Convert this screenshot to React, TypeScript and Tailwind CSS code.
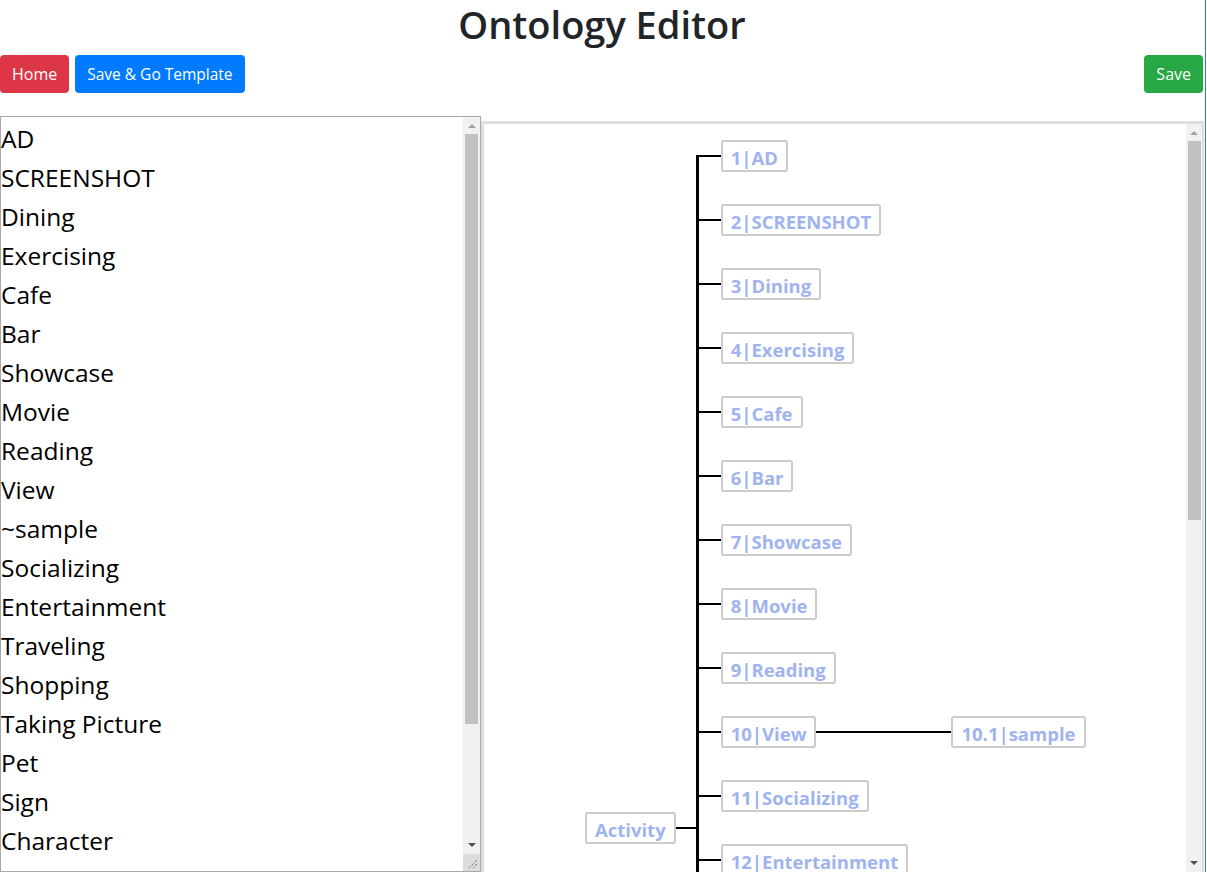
const listItems = [
  'AD',
  'SCREENSHOT',
  'Dining',
  'Exercising',
  'Cafe',
  'Bar',
  'Showcase',
  'Movie',
  'Reading',
  'View',
  '~sample',
  'Socializing',
  'Entertainment',
  'Traveling',
  'Shopping',
  'Taking Picture',
  'Pet',
  'Sign',
  'Character',
  'Food',
  'Sports',
  'Nature',
  'Event',
];

const treeNodes: { label: string; child?: string }[] = [
  { label: '1|AD' },
  { label: '2|SCREENSHOT' },
  { label: '3|Dining' },
  { label: '4|Exercising' },
  { label: '5|Cafe' },
  { label: '6|Bar' },
  { label: '7|Showcase' },
  { label: '8|Movie' },
  { label: '9|Reading' },
  { label: '10|View', child: '10.1|sample' },
  { label: '11|Socializing' },
  { label: '12|Entertainment' },
  { label: '13|Traveling' },
  { label: '14|Shopping' },
  { label: '15|Taking Picture' },
  { label: '16|Pet' },
  { label: '17|Sign' },
  { label: '18|Character' },
  { label: '19|Food' },
  { label: '20|Sports' },
  { label: '21|Nature' },
  { label: '22|Event' },
];

const font = { fontFamily: '"Open Sans", "Noto Sans", sans-serif' };

export default function App() {
  return (
    <div className="flex h-[872px] overflow-hidden bg-white" style={font}>
      <div className="w-[1204px] shrink-0">
        <h1 className="h-12 text-center text-[38px] font-semibold leading-[48px] text-[#212529]">
          Ontology Editor
        </h1>

        <div className="mt-[7px] flex items-center justify-between pr-px">
          <div className="flex gap-[6px]">
            <Btn color="bg-[#dc3545]">Home</Btn>
            <Btn color="bg-[#007bff]" small>
              Save &amp; Go Template
            </Btn>
          </div>
          <Btn color="bg-[#28a745]">Save</Btn>
        </div>

        <div className="mt-[23px] flex items-start">
          {/* left: raw list */}
          <div className="flex h-[756px] w-[481px] shrink-0 border border-[#a9a9a9]">
            <div className="flex-1 overflow-hidden pt-[2px]">
              {listItems.map((t) => (
                <div key={t} className="h-[39px] text-[24.5px] leading-[39px] text-black whitespace-nowrap">
                  {t}
                </div>
              ))}
            </div>
            <div className="flex w-[17px] flex-col bg-[#f1f1f1]">
              <Arrow dir="up" dim />
              <div className="mx-[2px] h-[590px] bg-[#c1c1c1]" />
              <div className="flex-1" />
              <Arrow dir="down" />
              <div className="flex h-[17px] items-end justify-end bg-[#dcdcdc] p-[2px]">
                <svg width="10" height="10" viewBox="0 0 10 10">
                  <path d="M9 1 L1 9 M9 5 L5 9" stroke="#555" strokeWidth="1" strokeDasharray="1 1" />
                </svg>
              </div>
            </div>
          </div>

          {/* right: tree view */}
          <div className="mt-[5px] flex h-[751px] flex-1 border-t-[3px] border-l-[3px] border-r-2 border-[#dedede]">
            <div className="flex-1 overflow-hidden">
              <div className="flex items-center pl-[101px]">
                <Node>Activity</Node>
                <div className="h-[2px] w-5 bg-black" />
                <div className="flex flex-col">
                  {treeNodes.map((n, i) => (
                    <div key={n.label} className="flex h-16 items-center">
                      <div className="flex h-full w-[25px] flex-col">
                        <div className={`flex-1 ${i === 0 ? '' : 'border-l-[3px] border-black'}`} />
                        <div className="h-[2px] bg-black" />
                        <div className={`flex-1 ${i === treeNodes.length - 1 ? '' : 'border-l-[3px] border-black'}`} />
                      </div>
                      <Node>{n.label}</Node>
                      {n.child && (
                        <>
                          <div className="h-[2px] w-[135px] bg-black" />
                          <Node>{n.child}</Node>
                        </>
                      )}
                    </div>
                  ))}
                </div>
              </div>
            </div>
            <div className="flex w-4 flex-col bg-[#f1f1f1]">
              <Arrow dir="up" dim />
              <div className="ml-[2px] mr-px h-[379px] bg-[#c1c1c1]" />
              <div className="flex-1" />
              <Arrow dir="down" />
            </div>
          </div>
        </div>
      </div>
      <div className="w-px shrink-0" />
      <div className="h-full w-px shrink-0 bg-[#1c7fe3]" />
    </div>
  );
}

function Btn({ color, small, children }: { color: string; small?: boolean; children: React.ReactNode }) {
  return (
    <button
      className={`${color} h-[38px] rounded-[4px] px-3 ${small ? 'text-[15.5px]' : 'text-[16px]'} leading-6 text-white`}
    >
      {children}
    </button>
  );
}

function Node({ children }: { children: React.ReactNode }) {
  return (
    <div className="flex h-[32px] shrink-0 items-center whitespace-nowrap rounded-[3px] border-2 border-[#cccccc] px-2 pt-[5px] text-[18.5px] font-bold leading-none text-[#9fb4ee]">
      {children}
    </div>
  );
}

function Arrow({ dir, dim }: { dir: 'up' | 'down'; dim?: boolean }) {
  return (
    <div className="flex h-[17px] items-center justify-center">
      <svg width="8" height="5" viewBox="0 0 8 5">
        <path d={dir === 'up' ? 'M0 5 L4 1 L8 5 Z' : 'M0 0 L8 0 L4 4 Z'} fill={dim ? '#a3a3a3' : '#505050'} />
      </svg>
    </div>
  );
}
